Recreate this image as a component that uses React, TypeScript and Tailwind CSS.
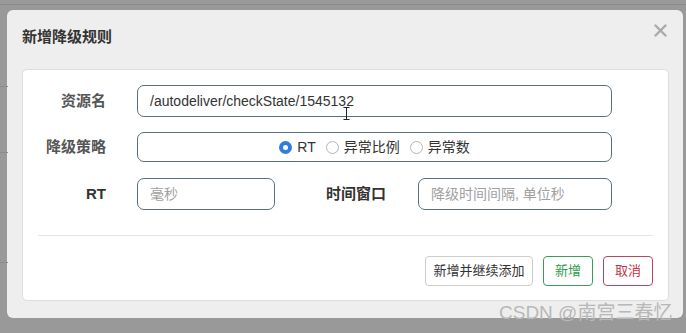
const font = { fontFamily: '"Liberation Sans", "Noto Sans CJK SC", sans-serif' };

const Radio = ({ checked, label }: { checked?: boolean; label: string }) => (
  <label className="flex items-center gap-[5px] text-[14px] text-[#333]">
    {checked ? (
      <span className="w-[13px] h-[13px] rounded-full bg-[#2f7de1] flex items-center justify-center">
        <span className="w-[5px] h-[5px] rounded-full bg-white" />
      </span>
    ) : (
      <span className="w-[13px] h-[13px] rounded-full border border-[#b5b5b5] bg-white" />
    )}
    <span>{label}</span>
  </label>
);

const App = () => {
  return (
    <div className="relative w-[686px] h-[333px] bg-[#999999] overflow-hidden" style={font}>
      {/* page behind the overlay */}
      <div className="absolute left-0 top-[4px] w-full h-px bg-[#8a8a8a]" />
      <div className="absolute left-0 top-[86px] w-[8px] h-px bg-[#8c8c8c]" />
      <div className="absolute left-0 top-[152px] w-[8px] h-px bg-[#8c8c8c]" />
      <div className="absolute left-0 top-[262px] w-[8px] h-px bg-[#8c8c8c]" />

      <div className="pt-[10px] pl-[7px]">
        <div className="w-[676px] h-[308px] bg-[#eeeeee] rounded-[6px] flex flex-col">
          {/* header */}
          <div className="h-[59px] flex items-start justify-between pl-[15px] pr-[16px]">
            <h3 className="mt-[18px] text-[15px] font-bold text-[#333] leading-[18px]">新增降级规则</h3>
            <button className="mt-[13px] w-[14px] h-[14px] flex items-center justify-center">
              <svg width="13" height="13" viewBox="0 0 13 13">
                <path d="M1.5 1.5 L11.5 11.5 M11.5 1.5 L1.5 11.5" stroke="#aaaaaa" strokeWidth="2.4" strokeLinecap="round" />
              </svg>
            </button>
          </div>

          {/* body panel */}
          <div className="relative mx-[15px] w-[647px] h-[232px] bg-white border border-[#dddddd] rounded-[5px] pt-[15px] px-[15px]">
            {/* row 1 */}
            <div className="flex items-center h-[32px]">
              <div className="w-[68px] text-right text-[15px] text-[#555] font-semibold">资源名</div>
              <div className="ml-[31px] w-[475px] h-[32px] border border-[#58707f] rounded-[7px] flex items-center px-[12px] text-[14px] text-[#333]">
                /autodeliver/checkState/1545132
              </div>
            </div>

            {/* row 2 */}
            <div className="flex items-center h-[30px] mt-[15px]">
              <div className="w-[68px] text-right text-[15px] text-[#555] font-semibold">降级策略</div>
              <div className="ml-[31px] w-[475px] h-[30px] border border-[#58707f] rounded-[7px] flex items-center justify-center gap-[10px]">
                <Radio checked label="RT" />
                <Radio label="异常比例" />
                <Radio label="异常数" />
              </div>
            </div>

            {/* row 3 */}
            <div className="flex items-center h-[32px] mt-[16px]">
              <div className="w-[68px] text-right text-[15px] text-[#333] font-bold">RT</div>
              <div className="ml-[31px] w-[138px] h-[32px] border border-[#58707f] rounded-[7px] flex items-center px-[12px] text-[14px] text-[#a0a0a0]">
                毫秒
              </div>
              <div className="w-[111px] text-right text-[15px] text-[#333] font-bold">时间窗口</div>
              <div className="ml-[32px] w-[194px] h-[32px] border border-[#58707f] rounded-[7px] flex items-center px-[12px] text-[14px] text-[#a0a0a0]">
                降级时间间隔, 单位秒
              </div>
            </div>

            <div className="mt-[25px] h-px bg-[#e5e5e5]" />

            <div className="mt-[20px] flex justify-end gap-[10px]">
              <button className="h-[30px] w-[108px] border border-[#cccccc] rounded-[4px] bg-white text-[13px] text-[#333]">
                新增并继续添加
              </button>
              <button className="h-[30px] w-[50px] border border-[#3f9a5e] rounded-[4px] bg-white text-[13px] text-[#2f9a4c]">
                新增
              </button>
              <button className="h-[30px] w-[50px] border border-[#b5475f] rounded-[4px] bg-white text-[13px] text-[#c0344a]">
                取消
              </button>
            </div>

            {/* mouse text cursor */}
            <svg className="absolute left-[320px] top-[37px]" width="7" height="13" viewBox="0 0 7 13">
              <path d="M0.5 0.5 H6.5 M3.5 0.5 V12.5 M0.5 12.5 H6.5" stroke="#222" strokeWidth="1" fill="none" />
            </svg>
          </div>
        </div>
      </div>

      {/* watermark */}
      <div className="absolute left-[499px] top-[301px] text-[19px] leading-[24px] text-[#b8b8b8] whitespace-nowrap">
        CSDN @南宫三春忆
      </div>
    </div>
  );
};

export default App;
